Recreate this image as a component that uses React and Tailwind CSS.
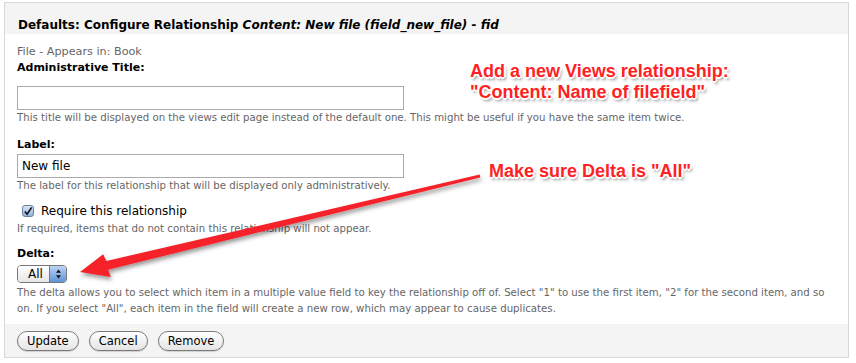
import React from 'react';

const Desc = ({ children, className = '' }) => (
  <div className={`text-[10.2px] leading-[16px] text-[#666] ${className}`}>{children}</div>
);

const Label = ({ children, className = '' }) => (
  <div className={`text-[11px] font-bold leading-[16px] text-black ${className}`}>{children}</div>
);

const PillButton = ({ children }) => (
  <button className="h-[20px] rounded-full border border-[#7a7a7a] bg-gradient-to-b from-white to-[#e4e4e4] px-[9px] text-[11.5px] leading-[18px] text-black shadow-[0_1px_1px_rgba(0,0,0,0.15)]">
    {children}
  </button>
);

const Note = ({ children, className = '' }) => (
  <div
    className={`absolute font-bold text-[18px] leading-[21px] text-[#ff1f24] [text-shadow:1px_1px_0_#fff,-1px_-1px_0_#fff,1px_-1px_0_#fff,-1px_1px_0_#fff,0_2px_0_#fff,2px_0_0_#fff,0_-2px_0_#fff,-2px_0_0_#fff,2px_3px_3px_rgba(0,0,0,0.45)] ${className}`}
    style={{ fontFamily: '"Liberation Sans", Arial, sans-serif' }}
  >
    {children}
  </div>
);

export default function App() {
  return (
    <div
      className="relative h-[363px] w-[856px] overflow-hidden bg-white pl-[4px] pr-[7px] pt-[2px]"
      style={{ fontFamily: '"DejaVu Sans", Verdana, sans-serif' }}
    >
      <div className="border border-[#d2d9dc]">
        {/* header */}
        <div className="h-[31px] bg-[#f4f4f4] pl-[13px] pt-[14px] text-[12px] font-bold leading-[16px] text-black">
          Defaults: Configure Relationship <i>Content: New file (field_new_file) - fid</i>
        </div>

        {/* body */}
        <div className="px-[12px] pb-[7px] pt-[10px]">
          <div className="text-[11.2px] leading-[16px] text-[#666]">File - Appears in: Book</div>

          <Label>Administrative Title:</Label>
          <input
            className="mt-[10px] block h-[24px] w-[387px] border border-[#aaa] bg-white px-[4px] text-[12px] outline-none"
            defaultValue=""
          />
          <Desc>
            This title will be displayed on the views edit page instead of the default one. This might be useful if you have the same item twice.
          </Desc>

          <Label className="mt-[11px]">Label:</Label>
          <input
            className="mt-[1px] block h-[24px] w-[387px] border border-[#aaa] bg-white px-[4px] text-[12px] text-black outline-none"
            defaultValue="New file"
          />
          <Desc>The label for this relationship that will be displayed only administratively.</Desc>

          <div className="mt-[9px] flex items-center pl-[5px] text-[12px] leading-[16px] text-black">
            <span className="mr-[7px] flex h-[12px] w-[12px] items-center justify-center rounded-[3px] border border-[#6a7f9c] bg-gradient-to-b from-[#dbe8f7] to-[#8fb2de]">
              <svg width="11" height="11" viewBox="0 0 11 11">
                <path d="M2 5.5 L4.5 8.5 L9.5 1" fill="none" stroke="#111" strokeWidth="1.8" />
              </svg>
            </span>
            Require this relationship
          </div>
          <Desc className="mt-[2px]">If required, items that do not contain this relationship will not appear.</Desc>

          <Label className="mt-[9px]">Delta:</Label>
          <div className="mt-[3px] flex h-[18px] w-[50px] overflow-hidden rounded-[4px] border border-[#777] text-[12px] leading-[16px] text-black">
            <div className="flex flex-1 items-center bg-gradient-to-b from-white to-[#e6e6e6] pl-[10px]">All</div>
            <div className="flex w-[17px] items-center justify-center border-l border-[#5d7fb0] bg-gradient-to-b from-[#bcd4f2] to-[#5e93d8]">
              <svg width="7" height="10" viewBox="0 0 7 10">
                <path d="M3.5 0.5 L6 3.8 L1 3.8 Z M3.5 9.5 L6 6.2 L1 6.2 Z" fill="#111" />
              </svg>
            </div>
          </div>
          <Desc className="mt-[2px] pr-[4px]">
            The delta allows you to select which item in a multiple value field to key the relationship off of. Select "1" to use the first item, "2" for the second item, and so on. If you select "All", each item in the field will create a new row, which may appear to cause duplicates.
          </Desc>
        </div>

        {/* footer */}
        <div className="flex h-[33px] items-center gap-[10px] bg-[#f4f4f4] pl-[12px]">
          <PillButton>Update</PillButton>
          <PillButton>Cancel</PillButton>
          <PillButton>Remove</PillButton>
        </div>
      </div>

      {/* annotations */}
      <Note className="left-[470px] top-[61px]">
        Add a new Views relationship:
        <br />
        "Content: Name of filefield"
      </Note>
      <Note className="left-[489px] top-[161px]">Make sure Delta is "All"</Note>

      <svg className="pointer-events-none absolute left-0 top-0" width="856" height="363">
        <defs>
          <filter id="sh" x="-10%" y="-30%" width="120%" height="160%">
            <feDropShadow dx="1" dy="3" stdDeviation="2" floodColor="#000" floodOpacity="0.4" />
          </filter>
        </defs>
        <polygon
          points="479.8,174.6 106.3,261 103.2,254.2 80,272 110.8,277 108.1,269.8 480.2,177.4"
          fill="#f5222a"
          filter="url(#sh)"
        />
      </svg>
    </div>
  );
}
